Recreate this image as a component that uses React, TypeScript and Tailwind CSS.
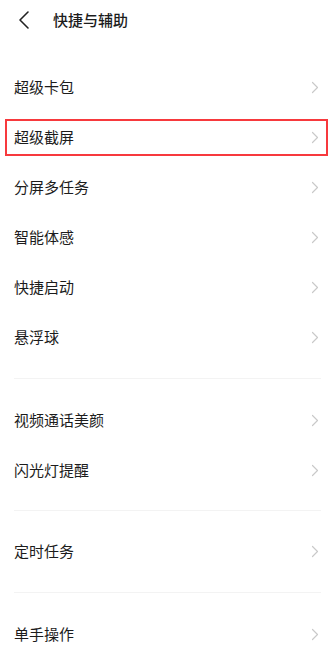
import React from "react";

const Chevron = () => (
  <svg width="8" height="13" viewBox="0 0 8 13" fill="none" className="shrink-0">
    <path d="M1.5 1.5L6.5 6.5L1.5 11.5" stroke="#c9c9c9" strokeWidth="1.2" strokeLinecap="round" strokeLinejoin="round" />
  </svg>
);

const Row = ({ label, boxed }: { label: string; boxed?: boolean }) => (
  <div className="relative flex h-[50px] items-center justify-between pl-[14px] pr-[16px]">
    <span className="text-[15px] text-[#1c1c1c]">{label}</span>
    <Chevron />
    {boxed && (
      <div className="absolute left-[5px] right-[7px] top-[7px] bottom-[6px] border-2 border-[#f7393d]" />
    )}
  </div>
);

const Divider = ({ tight }: { tight?: boolean }) => (
  <div className={tight ? "py-[15px] px-[14px]" : "py-4 px-[14px]"}>
    <div className="h-px bg-[#f3f3f3]" />
  </div>
);

export default function App() {
  return (
    <div
      className="w-[335px] h-[655px] overflow-hidden bg-white"
      style={{ fontFamily: '"Noto Sans CJK SC", "Noto Sans", sans-serif' }}
    >
      <div className="flex h-[40px] items-center">
        <svg width="12" height="20" viewBox="0 0 12 20" fill="none" className="ml-[18px]">
          <path d="M10 2L2 10L10 18" stroke="#222" strokeWidth="1.6" strokeLinecap="round" strokeLinejoin="round" />
        </svg>
        <span className="ml-[23px] text-[15px] font-medium text-[#1c1c1c]">快捷与辅助</span>
      </div>
      <div className="h-[22px]" />
      <Row label="超级卡包" />
      <Row label="超级截屏" boxed />
      <Row label="分屏多任务" />
      <Row label="智能体感" />
      <Row label="快捷启动" />
      <Row label="悬浮球" />
      <Divider />
      <Row label="视频通话美颜" />
      <Row label="闪光灯提醒" />
      <Divider tight />
      <Row label="定时任务" />
      <Divider />
      <Row label="单手操作" />
    </div>
  );
}
